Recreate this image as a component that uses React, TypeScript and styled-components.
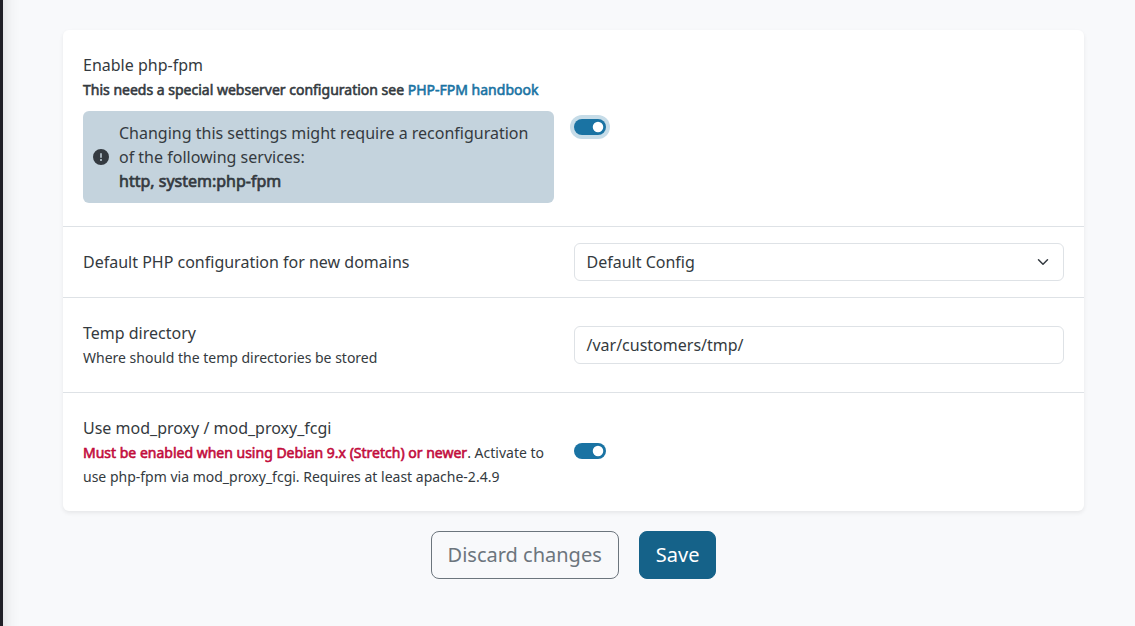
import React from "react";
import styled, { createGlobalStyle, css } from "styled-components";

const Global = createGlobalStyle`
  *, *::before, *::after { box-sizing: border-box; }
  body {
    margin: 0;
    background: #f8f9fb;
    color: #343a40;
    font: 400 16px/24px "Noto Sans", sans-serif;
  }
`;

const Page = styled.div`
  height: 626px;
  display: flex;
  overflow: hidden;
`;

const Sidebar = styled.div`
  flex: 0 0 243px;
  margin: -40px 0 -40px -240px;
  background: #1f1f26;
  box-shadow: 0 8px 16px rgba(0, 0, 0, 0.15);
`;

const Main = styled.main`
  flex: 1;
  padding: 30px 51px 0 60px;
`;

const Card = styled.section`
  background: #fff;
  border-radius: 6px;
  box-shadow: 0 2px 4px rgba(0, 0, 0, 0.075);
`;

const Row = styled.div<{ $height: number }>`
  height: ${(p) => p.$height}px;
  padding: 0 20px;
  display: grid;
  grid-template-columns: 471px 490px;
  column-gap: 20px;
  align-items: center;
  & + & { border-top: 1px solid #dee2e6; }
`;

const Label = styled.div`
  line-height: 24px;
`;

const Hint = styled.div`
  padding-top: 1px;
  margin-bottom: -1px;
  font-size: 14px;
  line-height: 24px;
`;

const Strong = styled.b<{ $danger?: boolean }>`
  font-weight: 400;
  -webkit-text-stroke: 0.042em currentColor;
  ${(p) => p.$danger && css`
    padding-right: 0.1px;
    color: #c20c3c;
  `}
`;

const Link = styled.a`
  color: #1a73a3;
  text-decoration: none;
`;

const Alert = styled.div`
  margin-top: 10px;
  height: 92px;
  padding: 10px;
  display: flex;
  align-items: center;
  gap: 10px;
  border-radius: 6px;
  background: #c4d3dd;
`;

const HintGroup = styled.div`
  display: flow-root;
  height: 48px;
`;

const AlertIcon = styled.svg`
  flex: none;
  width: 16px;
  height: 16px;
`;

const SwitchTrack = styled.button<{ $focused?: boolean }>`
  width: 32px;
  height: 16px;
  margin-bottom: 2px;
  padding: 0;
  display: flex;
  justify-content: flex-end;
  align-items: center;
  border: 0;
  border-radius: 8px;
  background: #1a73a3;
  ${(p) => p.$focused && css`box-shadow: 0 0 0 4px #c6dce8;`}
`;

const Switch = ({ focused }: { focused?: boolean }) => (
  <SwitchTrack $focused={focused} role="switch" aria-checked="true">
    <svg width="16" height="16" viewBox="0 0 16 16">
      <circle cx="8" cy="8" r="5.25" fill="#fff" />
    </svg>
  </SwitchTrack>
);

const Field = styled.div`
  height: 38px;
  padding: 0 12px 0 11.5px;
  display: flex;
  align-items: center;
  justify-content: space-between;
  border: 1px solid #dee2e6;
  border-radius: 6px;
  background: #fff;
`;

const Actions = styled.div`
  margin-top: 20px;
  display: flex;
  justify-content: center;
  gap: 20px;
`;

const Button = styled.button<{ $primary?: boolean }>`
  height: 48px;
  padding: 0 16px;
  border: 1px solid ${(p) => (p.$primary ? "#156289" : "#6c757d")};
  border-radius: 8px;
  background: ${(p) => (p.$primary ? "#156289" : "transparent")};
  color: ${(p) => (p.$primary ? "#fff" : "#6c757d")};
  font: 400 20px/30px "Noto Sans", sans-serif;
`;

export default function App() {
  return (
    <Page>
      <Global />
      <Sidebar />
      <Main>
        <Card>
          <Row $height={196}>
            <div>
              <HintGroup>
                <Label>Enable php-fpm</Label>
                <Hint><Strong>This needs a special webserver configuration see <Link>PHP-FPM handbook</Link></Strong></Hint>
              </HintGroup>
              <Alert>
                <AlertIcon viewBox="0 0 512 512">
                  <path fill="#343a40" d="M256 0a256 256 0 1 1 0 512 256 256 0 1 1 0-512zm0 128c-13.300 0-24 10.700-24 24v112c0 13.300 10.700 24 24 24s24-10.700 24-24V152c0-13.300-10.700-24-24-24zm32 224a32 32 0 1 0-64 0 32 32 0 1 0 64 0z" />
                </AlertIcon>
                <div>
                  Changing this settings might require a reconfiguration of the following services:
                  <br />
                  <Strong>http, system:php-fpm</Strong>
                </div>
              </Alert>
            </div>
            <Switch focused />
          </Row>
          <Row $height={71}>
            <Label>Default PHP configuration for new domains</Label>
            <Field>
              Default Config
              <svg width="16" height="12" viewBox="0 0 16 16">
                <path fill="none" stroke="#343a40" strokeWidth="2" strokeLinecap="round" strokeLinejoin="round" d="m2 5 6 6 6-6" />
              </svg>
            </Field>
          </Row>
          <Row $height={95}>
            <HintGroup>
              <Label>Temp directory</Label>
              <Hint>Where should the temp directories be stored</Hint>
            </HintGroup>
            <Field>/var/customers/tmp/</Field>
          </Row>
          <Row $height={119}>
            <div>
              <Label>Use mod_proxy / mod_proxy_fcgi</Label>
              <Hint><Strong $danger>Must be enabled when using Debian 9.x (Stretch) or newer</Strong>. Activate to use php-fpm via mod_proxy_fcgi. Requires at least apache-2.4.9</Hint>
            </div>
            <Switch />
          </Row>
        </Card>
        <Actions>
          <Button>Discard changes</Button>
          <Button $primary>Save</Button>
        </Actions>
      </Main>
    </Page>
  );
}
